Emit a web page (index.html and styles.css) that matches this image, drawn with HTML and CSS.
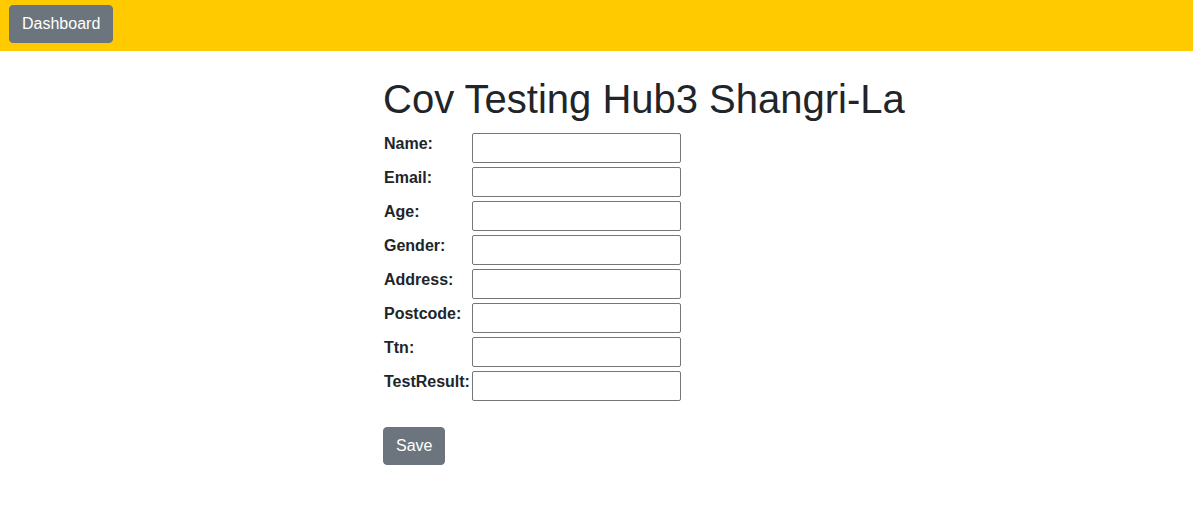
FILE: index.html
```html
<!DOCTYPE html>
<html lang="en">
<head>
<meta charset="utf-8">
<title>Cov Testing Hub3 Shangri-La</title>
<link rel="stylesheet" href="styles.css">
</head>
<body>
<nav class="navbar">
  <button class="btn" type="button">Dashboard</button>
</nav>
<main class="page">
  <h1 class="title">Cov Testing Hub3 Shangri-La</h1>
  <form class="form">
    <div class="fields">
      <label class="label" for="f-name">Name:</label><input class="field" id="f-name" type="text">
      <label class="label" for="f-email">Email:</label><input class="field" id="f-email" type="text">
      <label class="label" for="f-age">Age:</label><input class="field" id="f-age" type="text">
      <label class="label" for="f-gender">Gender:</label><input class="field" id="f-gender" type="text">
      <label class="label" for="f-address">Address:</label><input class="field" id="f-address" type="text">
      <label class="label" for="f-postcode">Postcode:</label><input class="field" id="f-postcode" type="text">
      <label class="label" for="f-ttn">Ttn:</label><input class="field" id="f-ttn" type="text">
      <label class="label" for="f-result">TestResult:</label><input class="field" id="f-result" type="text">
    </div>
    <button class="btn btn-save" type="button">Save</button>
  </form>
</main>
</body>
</html>
```

FILE: styles.css
```css
* { box-sizing: border-box; }

html, body {
  margin: 0;
  padding: 0;
  background: #ffffff;
  color: #212529;
  font-family: "Liberation Sans", Arial, sans-serif;
  font-size: 16px;
  line-height: 1.5;
}

.navbar {
  display: flex;
  align-items: flex-start;
  height: 51px;
  padding: 5px 9px 0 9px;
  background: #ffcb00;
}

.btn {
  display: inline-block;
  height: 38px;
  padding: 6px 12px;
  border: 1px solid #6c757d;
  border-radius: 4px;
  background: #6c757d;
  color: #ffffff;
  font-family: inherit;
  font-size: 16px;
  line-height: 24px;
  cursor: pointer;
}

.page {
  padding: 24px 0 0 383px;
}

.title {
  margin: 0 0 7px 0;
  font-size: 40px;
  font-weight: 500;
  line-height: 48px;
}

.form {
  display: flex;
  flex-direction: column;
  align-items: flex-start;
}

.fields {
  display: grid;
  grid-template-columns: 89px 209px;
  row-gap: 4px;
  padding-top: 3px;
}

.label {
  padding: 2px 0 0 1px;
  font-weight: 700;
  line-height: normal;
  white-space: nowrap;
}

.field {
  width: 209px;
  height: 30px;
  margin: 0;
  padding: 1px 2px;
  border: 1px solid #767676;
  border-radius: 2px;
  background: #ffffff;
  font-family: inherit;
  font-size: 16px;
}

.btn-save {
  margin-top: 26px;
}
```
